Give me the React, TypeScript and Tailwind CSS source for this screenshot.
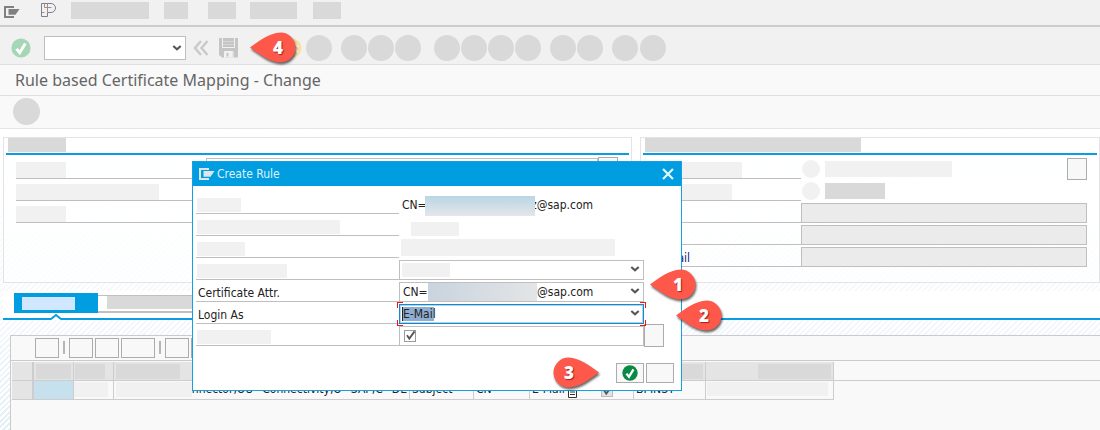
import type { ReactNode } from "react";

function WindowIcon({ className }: { className: string }) {
  return (
    <svg viewBox="0 0 16 12" className={`h-3 w-4 shrink-0 ${className}`} fill="none" aria-hidden="true">
      <path d="M10 1H1V11H10" stroke="currentColor" strokeWidth="2" />
      <path d="M4.5 3H15.5L11.5 8.8H4.5Z" fill="currentColor" />
    </svg>
  );
}

function Chevron() {
  return (
    <svg viewBox="0 0 10 7" className="pointer-events-none absolute right-1 top-1/2 h-1.75 w-2.5 -translate-y-1/2" fill="none" aria-hidden="true">
      <path d="M1.3 1.5L5 4.8L8.7 1.5" stroke="#555" strokeWidth="2.1" />
    </svg>
  );
}

function OkIcon({ fill, className }: { fill: string; className: string }) {
  return (
    <svg viewBox="0 0 20 20" className={className} aria-hidden="true">
      <circle cx="10" cy="10" r="9.6" fill={fill} />
      <path d="M5.5 10.8L8.7 14.8L14.3 5.5" fill="none" stroke="#fff" strokeWidth="2.9" />
    </svg>
  );
}

function Tick() {
  return (
    <svg viewBox="0 0 12 12" className="pointer-events-none absolute inset-0 h-3 w-3 overflow-visible" fill="none" aria-hidden="true">
      <path d="M3 5.2L5.3 8.6L10.6 1.4" stroke="#555" strokeWidth="1.8" />
    </svg>
  );
}

function Pin({ label, right, className }: { label: string; right?: boolean; className: string }) {
  return (
    <div className={`pointer-events-none absolute h-9 w-12 ${className}`}>
      <svg viewBox="0 0 48 36" className="absolute inset-0 h-9 w-12 overflow-visible drop-shadow-[1px_2px_1px_rgba(0,0,0,0.6)]" aria-hidden="true">
        <path
          d="M0 15.5C9 9 19 1 30.5 .5A15 15 0 0 1 30.5 30.5C20 30.5 9 22 0 15.5Z"
          fill="#fe584b"
          transform={right ? "translate(46 0) scale(-1 1)" : undefined}
        />
      </svg>
      <span
        className={`absolute top-1.5 w-5 text-center font-['Open_Sans',sans-serif] text-[17px] leading-5 font-extrabold text-white [text-shadow:1px_1px_1px_rgba(80,0,0,0.6)] ${right ? "left-1.5" : "left-[18px]"}`}
      >
        {label}
      </span>
    </div>
  );
}

function LabelCell({ bar, children }: { bar?: string; children?: ReactNode }) {
  return (
    <div className="flex h-[22px] items-end border-b border-[#bfbfbf]">
      {bar ? <span className={`mb-px h-3.5 bg-[#f1f1f1] ${bar}`} /> : children}
    </div>
  );
}

function GroupLabel({ bar, children }: { bar?: string; children?: ReactNode }) {
  return (
    <div className="flex h-[22px] items-end border-b border-[#bfbfbf]">
      {bar && <span className={`h-4 bg-[#f1f1f1] ${bar}`} />}
      {children}
    </div>
  );
}

function Group({ bar, className, children }: { bar: string; className: string; children: ReactNode }) {
  return (
    <section className={`h-[146px] min-w-0 border border-[#e4e4e4] bg-white/50 px-0.5 ${className}`}>
      <div className="flex h-[17px] items-start border-b-2 border-[#0a9de2] bg-white pl-0.5">
        <span className={`h-3.5 bg-[#d9d9d9] ${bar}`} />
      </div>
      {children}
    </section>
  );
}

const dots = ["ml-1", "ml-[9px]", "ml-px", "ml-px", "ml-[13px]", "ml-px", "ml-px", "ml-px", "ml-[9px]", "ml-px", "ml-[9px]", "ml-0.5"];
const menus = ["ml-[15px] w-[78px]", "ml-[15px] w-6", "ml-5 w-7", "ml-3.5 w-[47px]", "ml-4 w-7"];
const field = "h-5 w-full appearance-none border border-[#bfbfbf] bg-transparent pl-[3px] text-xs leading-4 text-[#222] outline-none";
const blankButton = "border border-[#acacac] bg-[#f8f8f8]";
const head = "h-[19px] border-r border-b border-[#cdcdcd] bg-[#e4e4e4] p-0 align-middle";
const cell = "h-[19px] overflow-hidden border-r border-b border-[#cdcdcd] bg-[#f9f9f9] p-0 align-top";

export default function App() {
  return (
    <div className="relative flex min-h-screen flex-col overflow-hidden bg-white font-['DejaVu_Sans_Condensed','DejaVu_Sans',sans-serif] text-xs text-[#222]">
      <nav aria-label="Menu" className="flex h-[27px] items-start border-b-2 border-[#cccccc] bg-[#f1f1f1] pl-1">
        <WindowIcon className="mt-1.5 text-[#808080]" />
        <svg viewBox="0 0 16 16" className="mt-0.5 ml-5 h-4 w-4" fill="none" stroke="#7b7d92" aria-hidden="true">
          <path d="M1.5 1.5H11A4.3 4.3 0 0 1 11 10.5H7.5V14.5H1.5Z" />
          <path d="M4.5 1.5V5.5H11.5M7.5 1.5V10.5M1.5 10.5H4.5" stroke="#a08f84" />
        </svg>
        {menus.map((m) => (
          <span key={m} className={`mt-0.5 h-[17px] bg-[#d9d9d9] ${m}`} />
        ))}
      </nav>

      <div role="toolbar" aria-label="System" className="flex h-[38px] items-center border-b border-[#dedede] bg-[#f1f1f1] pt-1 pl-[11px]">
        <button aria-label="Enter" className="h-5 w-5">
          <OkIcon fill="#a5d6b6" className="h-5 w-5" />
        </button>
        <div className="relative ml-[13px] w-[142px]">
          <select aria-label="Command" className="block h-6 w-full appearance-none border border-[#bfbfbf] bg-white outline-none">
            <option value="" />
          </select>
          <Chevron />
        </div>
        <button aria-label="Back" className="ml-[7px] h-4 w-4">
          <svg viewBox="0 0 16 16" className="h-4 w-4" fill="none" stroke="#c9c9c9" strokeWidth="2.4" aria-hidden="true">
            <path d="M8 1L2 8L8 15M14.5 1L8.5 8L14.5 15" />
          </svg>
        </button>
        <button aria-label="Save" className="ml-2.5 h-5 w-5">
          <svg viewBox="0 0 20 20" className="h-5 w-5" aria-hidden="true">
            <path d="M0 0H19V19.5H3L0 17Z" fill="#c5c5c5" />
            <path d="M3.5 0V9.5H15.5V0M5.5 20V13.5H14V20" fill="none" stroke="#f1f1f1" />
            <path d="M4 3.5H15M4 6.5H15" stroke="#d6d6d6" />
            <path d="M6 14H13.5V19.5H6Z" fill="#f1f1f1" />
            <path d="M7.5 15H9.5V18.5H7.5Z" fill="#c5c5c5" />
          </svg>
        </button>
        <button aria-label="Exit" className="ml-[43px] h-5 w-5">
          <svg viewBox="0 0 20 20" className="h-5 w-5" fill="none" aria-hidden="true">
            <circle cx="10" cy="10" r="9.5" fill="#fbdf9f" />
            <path d="M6 9L11.5 5L16 9M6 14L11.5 10L16 14" stroke="#fff" strokeWidth="2.2" />
          </svg>
        </button>
        {dots.map((d, i) => (
          <span key={i} className={`h-[26px] w-[26px] shrink-0 rounded-full bg-[#d9d9d9] ${d}`} />
        ))}
      </div>

      <h1 className="h-[31px] border-b border-[#dedede] bg-[#f9f9f9] pl-[15px] font-['Noto_Sans',sans-serif] text-base leading-[30px] text-[#666]">
        Rule based Certificate Mapping - Change
      </h1>
      <div className="flex h-[33px] items-center border-b border-[#e4e4e4] bg-[#f9f9f9] pb-0.5 pl-[13px]">
        <span className="h-[27px] w-[27px] rounded-full bg-[#d9d9d9]" />
      </div>

      <main className="flex flex-1 flex-col bg-[linear-gradient(180deg,#fff_0,rgba(255,255,255,0.7)_55%,rgba(255,255,255,0)_100%),repeating-linear-gradient(135deg,#fff_0_2px,#e3eff7_2px_4px)] pt-2 pl-[3px]">
        <div className="flex gap-2">
          <Group bar="w-[58px]" className="flex-[631]">
            <div className="grid grid-cols-[190px_1fr_20px] pt-0.5 pr-[11px] pl-2.5">
              <div>
                <GroupLabel bar="w-[50px]" />
                <GroupLabel bar="w-[143px]" />
                <GroupLabel bar="w-[50px]" />
              </div>
              <input aria-label="Attribute" className="mt-px h-5 border border-[#bfbfbf] bg-white" />
              <button aria-label="Pick attribute" className={`h-[22px] ${blankButton}`} />
            </div>
          </Group>
          <Group bar="w-[216px]" className="flex-[459]">
            <div className="grid grid-cols-[144px_1fr] pt-0.5 pr-2.5 pl-[14px]">
              <div>
                <GroupLabel bar="w-[85px]" />
                <GroupLabel bar="w-[75px]" />
                <GroupLabel />
                <GroupLabel />
                <GroupLabel>
                  <label htmlFor="mail" className="leading-4 text-[#22207a]">E-Mail</label>
                </GroupLabel>
              </div>
              <div>
                <div className="flex h-[22px] items-center pt-0.5 pl-px">
                  <span className="h-[18px] w-[18px] rounded-full bg-[#f1f1f1]" />
                  <span className="ml-[5px] h-4 w-[127px] bg-[#f1f1f1]" />
                  <button aria-label="Pick user" className={`ml-auto h-[22px] w-5 shrink-0 ${blankButton}`} />
                </div>
                <div className="flex h-[22px] items-center pt-0.5 pl-px">
                  <span className="h-[18px] w-[18px] rounded-full bg-[#f1f1f1]" />
                  <span className="ml-[5px] h-4 w-[60px] bg-[#d9d9d9]" />
                </div>
                <div className="flex flex-col gap-0.5 pt-0.5">
                  <input aria-label="User" readOnly className="h-5 w-full border border-[#bfbfbf] bg-[#ebebeb]" />
                  <input aria-label="Alias" readOnly className="h-5 w-full border border-[#bfbfbf] bg-[#ebebeb]" />
                  <input id="mail" readOnly className="h-5 w-full border border-[#bfbfbf] bg-[#ebebeb]" />
                </div>
              </div>
            </div>
          </Group>
        </div>

        <div className="relative mt-2 flex h-[29px] items-start border-b-2 border-[#0a9de2] bg-white pt-0.5 pl-[11px]">
          <button aria-label="Rules" className="flex h-5 w-[84px] items-center bg-[#009de0] pl-2">
            <span className="h-[13px] w-[53px] bg-[#d1e7ff]" />
          </button>
          <button aria-label="Details" className="mt-0.5 flex h-[18px] w-[110px] items-start border-t border-b-2 border-[#c0c0c0] bg-white pl-[9px]">
            <span className="h-[13px] w-full bg-[#d9d9d9]" />
          </button>
          <svg viewBox="0 0 10 6" className="absolute bottom-[-2px] left-12 h-1.5 w-2.5" aria-hidden="true">
            <path d="M0 6L5 1L10 6Z" fill="#fff" />
            <path d="M0 5L5 1L10 5" fill="none" stroke="#0a9de2" strokeWidth="2" />
          </svg>
        </div>

        <section className="mt-[15px] ml-[7px] flex-1 border-t border-l border-[#cacaca] bg-[#f9f9f9]">
          <div className="flex h-[25px] items-start border-b border-[#cacaca] pt-0.5 pl-6">
            <button aria-label="View" className={`h-5 w-6 ${blankButton}`} />
            <i className="mx-1 mt-[3px] h-[13px] w-0.5 bg-[#b5b5b5]" />
            <button aria-label="Add" className={`h-5 w-6 ${blankButton}`} />
            <button aria-label="Edit" className={`ml-0.5 h-5 w-6 ${blankButton}`} />
            <button aria-label="Sort" className={`ml-0.5 h-5 w-[34px] ${blankButton}`} />
            <i className="mx-1 mt-[3px] h-[13px] w-0.5 bg-[#b5b5b5]" />
            <button aria-label="Find" className={`h-5 w-6 ${blankButton}`} />
            <button aria-label="Filter" className={`ml-0.5 h-5 w-6 ${blankButton}`} />
          </div>
          <div className="flex items-start pt-px pl-px">
            <table className="w-[822px] shrink-0 table-fixed border-separate border-spacing-0">
              <colgroup>
                <col className="w-[21px]" />
                <col className="w-[41px]" />
                <col className="w-10" />
                <col className="w-[296px]" />
                <col className="w-16" />
                <col className="w-14" />
                <col className="w-[104px]" />
                <col className="w-[72px]" />
                <col className="w-32" />
              </colgroup>
              <thead>
                <tr>
                  <th className={head} />
                  <th className={`${head} border-l`}><div className="ml-0.5 h-[15px] w-[35px] bg-[#d9d9d9]" /></th>
                  <th className={head}><div className="ml-px h-[15px] w-[30px] bg-[#d9d9d9]" /></th>
                  <th className={head}><div className="ml-0.5 h-[15px] w-16 bg-[#d9d9d9]" /></th>
                  <th className={head} />
                  <th className={head} />
                  <th className={head} />
                  <th className={head}><div className="h-[15px] w-[69px] bg-[#d9d9d9]" /></th>
                  <th className={head}><div className="ml-auto mr-0.5 h-[15px] w-[73px] bg-[#d9d9d9]" /></th>
                </tr>
              </thead>
              <tbody>
                <tr className="text-xs leading-4 whitespace-nowrap">
                  <td className={`${cell} bg-[#e4e4e4]!`} />
                  <td className={`${cell} border-l bg-[#c7e0ee]!`} />
                  <td className={cell}><div className="mt-px h-[15px] w-[34px] bg-[#f1f1f1]" /></td>
                  <td className={cell}>
                    <div className="flex justify-end pr-0.5">
                      <span className="mt-px ml-0.5 h-[15px] flex-1 bg-[#f1f1f1]" />
                      <span>nnector,OU=Connectivity,O=SAP,C=DE</span>
                    </div>
                  </td>
                  <td className={`${cell} pl-0.5`}>Subject</td>
                  <td className={`${cell} pl-0.5`}>CN</td>
                  <td className={`${cell} pl-0.5`}>
                    <div className="flex h-4 items-center">
                      <span className="w-9">E-Mail</span>
                      <svg viewBox="0 0 9 14" className="mt-1 h-3.5 w-[9px]" aria-hidden="true">
                        <path d="M.5 1.5H8.5V13.5H.5Z" fill="#fff" stroke="#333" />
                        <path d="M2 5.5H7M2 8H7M2 10.5H7" stroke="#333" />
                      </svg>
                      <span className="relative mt-1 ml-6 h-3 w-3">
                        <input type="checkbox" aria-label="Active" defaultChecked className="block h-3 w-3 appearance-none border border-[#bcbcbc] bg-[#e2e2e2]" />
                        <Tick />
                      </span>
                    </div>
                  </td>
                  <td className={`${cell} pl-0.5`}>BPINST</td>
                  <td className={cell}><div className="mt-px ml-px h-3.5 w-[121px] bg-[#f1f1f1]" /></td>
                </tr>
              </tbody>
            </table>
            <div className="h-[19px] flex-1 border-b border-[#cdcdcd]" />
          </div>
        </section>
      </main>

      <div role="dialog" aria-labelledby="dialog-title" className="absolute top-[161px] left-[192px] flex h-[230px] w-[490px] flex-col border border-[#14a0e4] bg-white">
        <header className="flex h-6 shrink-0 items-center bg-[#009de0] pr-[7px] pl-1.5 text-white">
          <WindowIcon className="text-[#dfe6ea]" />
          <h2 id="dialog-title" className="ml-0.5 flex-1 pb-px text-xs text-[#dff3fd]">Create Rule</h2>
          <button aria-label="Close" className="h-3 w-3">
            <svg viewBox="0 0 12 12" className="h-3 w-3" aria-hidden="true">
              <path d="M1 1L11 11M11 1L1 11" stroke="#e5f3fa" strokeWidth="2.2" />
            </svg>
          </button>
        </header>
        <div className="grid grid-cols-[203px_245px_1fr] pt-1.5 pr-[17px] pl-[3px]">
          <LabelCell bar="ml-px w-11" />
          <div className="col-span-2 flex h-[22px] items-center pt-1 pl-[3px] leading-4">
            <span className="w-[23px]">CN=</span>
            <span className="z-10 mt-0.5 h-5 w-[110px] bg-linear-to-b from-[#b9d6e4] to-[#e4e6ea]" />
            <span className="-ml-1">z@sap.com</span>
          </div>

          <LabelCell bar="ml-px w-[143px]" />
          <div className="col-span-2 flex items-end pl-3"><span className="h-3.5 w-12 bg-[#f1f1f1]" /></div>

          <LabelCell bar="ml-px w-12" />
          <div className="col-span-2 flex items-center pl-0.5"><span className="h-[17px] w-[214px] bg-[#f1f1f1]" /></div>

          <LabelCell bar="ml-px w-[90px]" />
          <div className="relative flex items-end">
            <select aria-label="Kind" className={field}><option value="" /></select>
            <span className="pointer-events-none absolute bottom-[3px] left-[3px] h-3.5 w-12 bg-[#f1f1f1]" />
            <Chevron />
          </div>
          <div />

          <LabelCell><label htmlFor="attr" className="pl-0.5 leading-4">Certificate Attr.</label></LabelCell>
          <div className="relative flex items-end">
            <select id="attr" className={field}><option>CN=</option></select>
            <div className="pointer-events-none absolute bottom-px left-[29px] flex h-[18px] items-center leading-4">
              <span className="h-[18px] w-[109px] bg-linear-to-r from-[#c9d4de] to-[#e3e5e7]" />
              <span>@sap.com</span>
            </div>
            <Chevron />
          </div>
          <div />

          <LabelCell><label htmlFor="login" className="pl-0.5 leading-4">Login As</label></LabelCell>
          <div className="relative z-10 flex items-end">
            <span className="absolute bottom-[3px] left-[3px] h-3.5 w-8 border-l border-[#222] bg-[#8fadd1]" />
            <select id="login" className={`${field} relative border-[#1b87c9]! inset-ring inset-ring-[#a9d5ee]`}><option>E-Mail</option></select>
            <i className="absolute top-0 -left-0.5 h-1.5 w-1.5 border-t border-l border-t-[#f01414] border-l-[#f01414]" />
            <i className="absolute top-0 -right-0.5 h-1.5 w-1.5 border-t border-r border-t-[#f01414] border-r-[#f01414]" />
            <i className="absolute -bottom-0.5 -left-0.5 h-1.5 w-1.5 border-b border-l border-b-[#f01414] border-l-[#f01414]" />
            <i className="absolute -right-0.5 -bottom-0.5 h-1.5 w-1.5 border-r border-b border-r-[#f01414] border-b-[#f01414]" />
            <Chevron />
          </div>
          <div />

          <LabelCell bar="ml-px w-[74px]" />
          <div className="flex items-end">
            <div className="flex h-5 w-full items-center border border-[#bfbfbf] pl-1">
              <span className="relative h-3 w-3">
                <input type="checkbox" aria-label="Enabled" defaultChecked className="block h-3 w-3 appearance-none border border-[#9a9a9a] bg-white" />
                <Tick />
              </span>
            </div>
          </div>
          <button aria-label="More" className={`-mb-px h-[23px] w-5 ${blankButton}`} />
        </div>
        <footer className="mt-auto flex justify-end gap-0.5 pr-[7px] pb-[7px]">
          <button aria-label="Confirm" className={`flex h-5 w-7 items-center justify-center ${blankButton}`}>
            <OkIcon fill="#078a43" className="h-4 w-4" />
          </button>
          <button aria-label="Cancel" className={`h-5 w-7 ${blankButton}`} />
        </footer>
      </div>

      <Pin label="4" className="top-8 left-[250px]" />
      <Pin label="1" className="top-[269px] left-[650px]" />
      <Pin label="2" className="top-[300px] left-[676px]" />
      <Pin label="3" right className="top-[357px] left-[553px]" />
    </div>
  );
}
